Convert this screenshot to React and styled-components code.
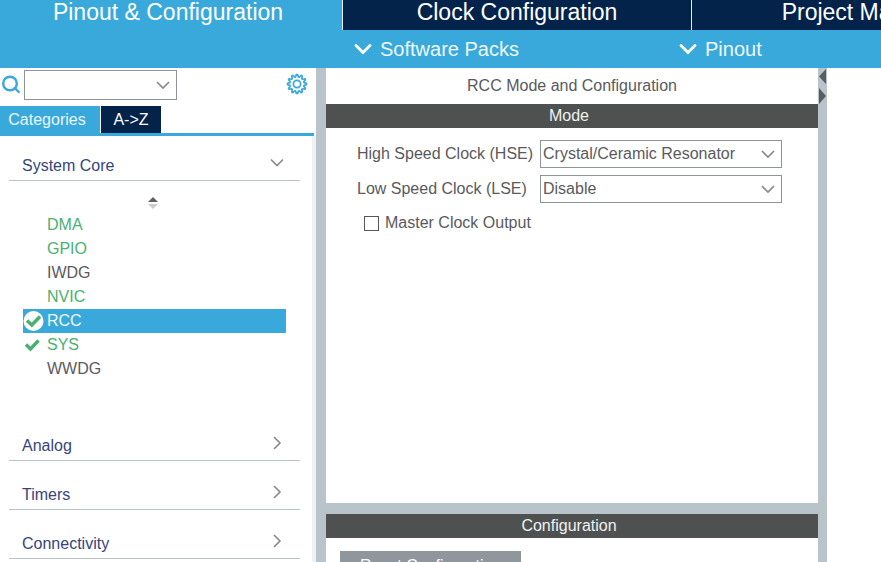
import React from "react";
import styled, { createGlobalStyle } from "styled-components";

const blue = "#39a9dc";
const navy = "#03234b";
const steel = "#b8c4ca";
const green = "#49b170";
const ink = "#5a5a5d";

const GlobalStyle = createGlobalStyle`
  *, *::before, *::after { box-sizing: border-box; }
  body { margin: 0; background: #fff; overflow: hidden; }
  body, button, select, input {
    font-family: "Liberation Sans", Arial, sans-serif;
    font-size: 16px;
    line-height: 20px;
  }
  button { border: 0; padding: 0; background: none; cursor: pointer; }
  ul { list-style: none; margin: 0; padding: 0; }
  svg { display: block; flex: none; }
`;

const Page = styled.div`
  display: flex;
  flex-direction: column;
  height: 100vh;
  overflow: hidden;
  color: ${ink};
`;

const Header = styled.header`
  display: grid;
  grid-template-columns: 342px 1fr;
  flex: none;
  background: ${blue};
`;

const HeaderSide = styled.div`
  min-width: 0;
  overflow: hidden;
`;

const TabStrip = styled.nav`
  display: flex;
  height: 30px;
`;

const MainTab = styled.button`
  flex: none;
  width: ${(p) => (p.$active ? "336px" : "349px")};
  height: 30px;
  padding-bottom: 6px;
  border-left: ${(p) => (p.$active ? "0" : "1px solid #e6eef3")};
  background: ${(p) => (p.$active ? blue : navy)};
  color: #fff;
  font-size: 23px;
  line-height: 24px;
`;

const SubMenu = styled.div`
  display: flex;
  height: 38px;
`;

const SubMenuButton = styled.button`
  display: flex;
  align-items: center;
  gap: 8px;
  flex: none;
  width: 325px;
  padding-left: 12px;
  color: #eef8fd;
  font-size: 20px;
  line-height: 24px;
`;

const Workspace = styled.div`
  display: grid;
  grid-template-columns: 316px 10px minmax(0, 1fr) 9px 54px;
  flex: 1;
  min-height: 0;
`;

const Sidebar = styled.aside`
  display: flex;
  flex-direction: column;
  min-height: 0;
  overflow: hidden;
`;

const SearchRow = styled.div`
  display: flex;
  align-items: center;
  height: 38px;
  padding: 0 8px 4px 1px;
  flex: none;
`;

const SelectBox = styled.div`
  position: relative;
  width: ${(p) => p.$width};
  margin-left: ${(p) => (p.$spaced ? "3px" : "0")};
`;

const Select = styled.select`
  display: block;
  width: 100%;
  height: ${(p) => (p.$tall ? "30px" : "28px")};
  padding: 0 32px 0 2px;
  appearance: none;
  border: 1px solid #8d9499;
  border-radius: 0;
  background: #fff;
  color: ${ink};
`;

const SelectArrow = styled.span`
  position: absolute;
  right: 7px;
  top: 50%;
  transform: translateY(-50%);
  pointer-events: none;
`;

const GearButton = styled.button`
  margin-left: auto;
  padding-bottom: 2px;
`;

const ViewTabs = styled.div`
  display: flex;
  gap: 1px;
  flex: none;
  margin-right: 2px;
  border-bottom: 3px solid ${blue};
`;

const ViewTab = styled.button`
  height: 27px;
  width: ${(p) => (p.$active ? "100px" : "60px")};
  padding-right: ${(p) => (p.$active ? "6px" : "0")};
  background: ${(p) => (p.$active ? blue : navy)};
  color: ${(p) => (p.$active ? "#e9f6fc" : "#fff")};
`;

const Tree = styled.div`
  flex: 1;
  padding: 0 12px 0 9px;
  border-right: 4px solid #f0f1f3;
`;

const GroupButton = styled.button`
  display: flex;
  align-items: center;
  justify-content: space-between;
  width: 100%;
  height: ${(p) => (p.$first ? "45px" : "49px")};
  padding: ${(p) => (p.$first ? "15px 16px 0 13px" : "20px 16px 0 13px")};
  border-bottom: 1px solid ${steel};
  color: #36457c;
`;

const GroupArrow = styled.span`
  padding-bottom: 6px;
`;

const Members = styled.div`
  padding: 0 14px 31px;
`;

const SortButton = styled.button`
  display: flex;
  justify-content: center;
  align-items: center;
  width: 100%;
  height: 32px;
  padding: 12px 4px 0 0;
`;

const Member = styled.li`
  display: flex;
  align-items: center;
  height: 24px;
  background: ${(p) => (p.$selected ? blue : "transparent")};
  color: ${(p) => (p.$selected ? "#f0f9fe" : p.$enabled ? green : ink)};
`;

const MemberMark = styled.span`
  width: 24px;
  flex: none;
`;

const Splitter = styled.div`
  background: ${steel};
`;

const Collapse = styled.button`
  display: block;
  width: 9px;
  height: 38px;
  overflow: hidden;
`;

const Center = styled.main`
  min-width: 0;
  overflow: hidden;
`;

const PanelTitle = styled.h1`
  margin: 0;
  height: 36px;
  padding-top: 8px;
  font-size: 16px;
  font-weight: 400;
  text-align: center;
`;

const DarkBar = styled.h2`
  margin: 0;
  height: 24px;
  padding: 2px 6px 0 0;
  background: #4f5150;
  color: #f1f1f1;
  font-size: 16px;
  font-weight: 400;
  text-align: center;
`;

const ModeForm = styled.form`
  display: flex;
  flex-direction: column;
  gap: 7px;
  height: 375px;
  padding: 12px 0 0 31px;
`;

const Field = styled.div`
  display: grid;
  grid-template-columns: 183px 242px;
  align-items: center;
`;

const CheckField = styled.label`
  display: flex;
  align-items: center;
  gap: 6px;
  height: 28px;
  padding-left: 7px;
  padding-bottom: 2px;
`;

const Checkbox = styled.input`
  appearance: none;
  width: 15px;
  height: 15px;
  margin: 0;
  border: 1px solid #55585a;
  background: #fff;
`;

const HorizontalSplitter = styled.div`
  height: 11px;
  background: ${steel};
`;

const ConfigBody = styled.div`
  padding: 13px 14px;
`;

const ResetButton = styled.button`
  height: 30px;
  padding: 0 20px;
  background: #8f979d;
  color: #fff;
`;

function Chevron() {
  return (
    <svg width="14" height="9" viewBox="0 0 14 9" fill="none" aria-hidden="true">
      <path d="M1 1.5 L7 7.5 L13 1.5" stroke="#85898c" strokeWidth="1.6" />
    </svg>
  );
}

function ChevronRight() {
  return (
    <svg width="14" height="14" viewBox="0 0 14 14" fill="none" aria-hidden="true">
      <path d="M4 1 L10 7 L4 13" stroke="#85898c" strokeWidth="1.6" />
    </svg>
  );
}

function MenuChevron() {
  return (
    <svg width="18" height="12" viewBox="0 0 18 12" fill="none" aria-hidden="true">
      <path d="M2 2.5 L9 9.5 L16 2.5" stroke="#fff" strokeWidth="2.8" strokeLinecap="round" />
    </svg>
  );
}

function SearchIcon() {
  return (
    <svg width="20" height="20" viewBox="0 0 20 20" fill="none" stroke={blue} strokeWidth="2.4" aria-hidden="true">
      <circle cx="9" cy="8.5" r="6.8" />
      <path d="M13.8 13.2 L17.8 17" strokeLinecap="round" />
    </svg>
  );
}

const gearPoints = Array.from({ length: 48 }, (_, i) => {
  const radius = i % 4 < 2 ? 9.5 : 7.2;
  const angle = ((i - 0.5) * Math.PI) / 24;
  return `${(11 + radius * Math.sin(angle)).toFixed(2)},${(11 - radius * Math.cos(angle)).toFixed(2)}`;
}).join(" ");

function GearIcon() {
  return (
    <svg width="22" height="22" viewBox="0 0 22 22" fill="none" stroke={blue} strokeWidth="1.7" aria-hidden="true">
      <polygon points={gearPoints} strokeLinejoin="round" />
      <circle cx="11" cy="11" r="3.6" />
    </svg>
  );
}

function SortIcon() {
  return (
    <svg width="10" height="14" viewBox="0 0 10 14" aria-hidden="true">
      <path d="M0 6 L5 1 L10 6 Z" fill="#5d6062" />
      <path d="M0 8 H10 L5 13 Z" fill="#c9cbcc" />
    </svg>
  );
}

function CheckIcon({ circled }) {
  return (
    <svg width="22" height="22" viewBox="0 0 22 22" fill="none" aria-hidden="true">
      {circled && <circle cx="10.5" cy="11" r="10" fill="#fff" />}
      <path
        d={circled ? "M4 10.5 L8.8 15 L17 6.5" : "M3 10.5 L7.5 15 L15.5 6.5"}
        stroke={green}
        strokeWidth="3.4"
      />
    </svg>
  );
}

function CollapseIcon() {
  return (
    <svg width="9" height="38" viewBox="0 0 9 38" fill="#5b5c5e" aria-hidden="true">
      <path d="M8 1 V16 L1 8.5 Z" />
      <path d="M1 20 V36 L8 28 Z" />
    </svg>
  );
}

const members = [
  { name: "DMA", enabled: true },
  { name: "GPIO", enabled: true },
  { name: "IWDG" },
  { name: "NVIC", enabled: true },
  { name: "RCC", enabled: true, checked: true, selected: true },
  { name: "SYS", enabled: true, checked: true },
  { name: "WWDG" },
];

const closedGroups = ["Analog", "Timers", "Connectivity"];

function LabeledSelect({ id, label, value }) {
  return (
    <Field>
      <label htmlFor={id}>{label}</label>
      <SelectBox $width="100%">
        <Select id={id} defaultValue={value}>
          <option>{value}</option>
        </Select>
        <SelectArrow>
          <Chevron />
        </SelectArrow>
      </SelectBox>
    </Field>
  );
}

export default function App() {
  return (
    <Page>
      <GlobalStyle />
      <Header>
        <MainTab $active>Pinout &amp; Configuration</MainTab>
        <HeaderSide>
          <TabStrip>
            <MainTab>Clock Configuration</MainTab>
            <MainTab>Project Manager</MainTab>
          </TabStrip>
          <SubMenu>
            <SubMenuButton>
              <MenuChevron />
              Software Packs
            </SubMenuButton>
            <SubMenuButton>
              <MenuChevron />
              Pinout
            </SubMenuButton>
          </SubMenu>
        </HeaderSide>
      </Header>
      <Workspace>
        <Sidebar>
          <SearchRow>
            <SearchIcon />
            <SelectBox $width="153px" $spaced>
              <Select $tall aria-label="Search" defaultValue="">
                <option value=""></option>
              </Select>
              <SelectArrow>
                <Chevron />
              </SelectArrow>
            </SelectBox>
            <GearButton aria-label="Settings">
              <GearIcon />
            </GearButton>
          </SearchRow>
          <ViewTabs>
            <ViewTab $active>Categories</ViewTab>
            <ViewTab>A-&gt;Z</ViewTab>
          </ViewTabs>
          <Tree>
            <GroupButton $first aria-expanded="true">
              System Core
              <GroupArrow>
                <Chevron />
              </GroupArrow>
            </GroupButton>
            <Members>
              <SortButton aria-label="Sort">
                <SortIcon />
              </SortButton>
              <ul>
                {members.map((m) => (
                  <Member key={m.name} $selected={m.selected} $enabled={m.enabled}>
                    <MemberMark>{m.checked && <CheckIcon circled={m.selected} />}</MemberMark>
                    {m.name}
                  </Member>
                ))}
              </ul>
            </Members>
            {closedGroups.map((name) => (
              <GroupButton key={name} aria-expanded="false">
                {name}
                <GroupArrow>
                  <ChevronRight />
                </GroupArrow>
              </GroupButton>
            ))}
          </Tree>
        </Sidebar>
        <Splitter />
        <Center>
          <PanelTitle>RCC Mode and Configuration</PanelTitle>
          <DarkBar>Mode</DarkBar>
          <ModeForm>
            <LabeledSelect id="hse" label="High Speed Clock (HSE)" value="Crystal/Ceramic Resonator" />
            <LabeledSelect id="lse" label="Low Speed Clock (LSE)" value="Disable" />
            <CheckField>
              <Checkbox type="checkbox" />
              Master Clock Output
            </CheckField>
          </ModeForm>
          <HorizontalSplitter />
          <DarkBar>Configuration</DarkBar>
          <ConfigBody>
            <ResetButton>Reset Configuration</ResetButton>
          </ConfigBody>
        </Center>
        <Splitter>
          <Collapse aria-label="Resize panels">
            <CollapseIcon />
          </Collapse>
        </Splitter>
      </Workspace>
    </Page>
  );
}
